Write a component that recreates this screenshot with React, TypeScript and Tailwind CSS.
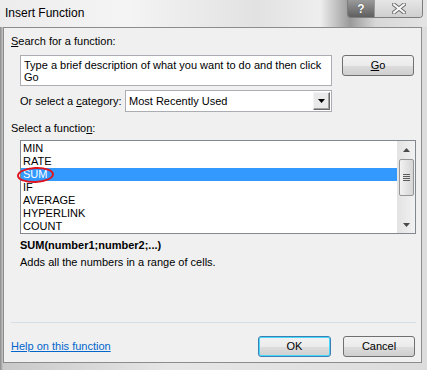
import React from "react";

const F = { fontFamily: '"Liberation Sans", Arial, sans-serif' };

function Btn({ children, w, focus }: { children: React.ReactNode; w: string; focus?: boolean }) {
  return (
    <div
      className={`${w} h-[21px] rounded-[3px] border ${focus ? "border-[#3c7fb1]" : "border-[#707070]"} flex items-center justify-center text-[11px] text-black bg-[linear-gradient(#f2f2f2_0%,#ebebeb_50%,#dddddd_51%,#cfcfcf_100%)]`}
      style={focus ? { boxShadow: "inset 0 0 0 1px #48d8fb" } : undefined}
    >
      {children}
    </div>
  );
}

const items = ["MIN", "RATE", "SUM", "IF", "AVERAGE", "HYPERLINK", "COUNT"];

export default function App() {
  return (
    <div
      className="w-[427px] h-[370px] overflow-hidden relative bg-[linear-gradient(90deg,#8a8a8a_0px,#c9c9c9_3px,#e6e6e6_40%,#dcdcdc_100%)]"
      style={F}
    >
      {/* title bar */}
      <div className="h-[27px] flex items-center pl-[5px] text-[12px] text-black bg-[linear-gradient(90deg,#ececec_0%,#f4f4f4_30%,#e2e2e2_60%,#eeeeee_75%,#9a9a9a_82%,#d8d8d8_88%,#e4e4e4_100%)]">
        <span className="mt-[-1px]">Insert Function</span>
      </div>
      <div className="absolute top-0 left-[347px] flex h-[18px] border border-t-0 border-[#7d7d7d] rounded-b-[4px] overflow-hidden">
        <div className="w-[27px] h-full flex items-center justify-center bg-[linear-gradient(#9a9a9a,#5f5f5f)] border-r border-[#9a9a9a]">
          <span className="text-white font-bold text-[12px] leading-none" style={{ textShadow: "0 0 1px #333" }}>?</span>
        </div>
        <div className="w-[47px] h-full flex items-center justify-center bg-[linear-gradient(#e6e6e6,#cfcfcf)]">
          <svg width="14" height="11" viewBox="0 0 14 11">
            <path d="M2 1.5 L12 9.5 M12 1.5 L2 9.5" stroke="#6d6d6d" strokeWidth="4" strokeLinecap="square" />
            <path d="M2 1.5 L12 9.5 M12 1.5 L2 9.5" stroke="#f8f8f8" strokeWidth="2" strokeLinecap="square" />
          </svg>
        </div>
      </div>

      {/* client area */}
      <div className="ml-[3px] w-[419px] h-[336px] border border-[#8c8c8c] bg-[#f0f0f0] pl-[7px] pr-[6px] text-[11px] text-black flex flex-col">
        <div className="mt-[7px] h-[13px] leading-[13px]">
          <span className="underline">S</span>earch for a function:
        </div>
        <div className="mt-[7px] flex items-start pl-[9px]">
          <div className="w-[312px] h-[31px] border border-[#abadb3] bg-white px-[3px] pt-[3px] leading-[12px]">
            Type a brief description of what you want to do and then click Go
          </div>
          <div className="ml-[10px]">
            <Btn w="w-[72px]">
              <span><span className="underline">G</span>o</span>
            </Btn>
          </div>
        </div>
        <div className="mt-[4px] flex items-center pl-[9px] h-[22px]">
          <div className="w-[105px]">
            Or select a <span className="underline">c</span>ategory:
          </div>
          <div className="w-[207px] h-[22px] border border-[#abadb3] bg-white flex items-center pl-[3px] pr-[1px]">
            <span className="flex-1">Most Recently Used</span>
            <div className="w-[17px] h-[18px] bg-[#e9e9e9] border border-t-[#f4f4f4] border-l-[#f4f4f4] border-r-[#696969] border-b-[#696969] flex items-center justify-center" style={{ boxShadow: "inset -1px -1px 0 #a0a0a0" }}>
              <svg width="7" height="4" viewBox="0 0 7 4"><path d="M0 0 H7 L3.5 4 Z" fill="#000" /></svg>
            </div>
          </div>
        </div>
        <div className="mt-[10px] h-[13px] leading-[13px]">
          Select a functio<span className="underline">n</span>:
        </div>
        <div className="mt-[5px] ml-[9px] w-[396px] h-[94px] border border-[#828790] bg-white flex relative">
          <div className="flex-1 pt-[1px]">
            {items.map((it) => (
              <div
                key={it}
                className={`h-[13px] leading-[13px] pl-[2px] ${it === "SUM" ? "bg-[#3399ff] text-white" : ""}`}
              >
                {it}
              </div>
            ))}
          </div>
          <div className="w-[18px] h-full bg-[linear-gradient(90deg,#e3e3e3,#f1f1f1)] flex flex-col items-center">
            <div className="h-[18px] flex items-center justify-center">
              <svg width="7" height="4" viewBox="0 0 7 4"><path d="M3.5 0 L7 4 H0 Z" fill="#4a4a4a" /></svg>
            </div>
            <div className="w-[15px] h-[37px] ml-[1px] rounded-[2px] border border-[#959595] bg-[linear-gradient(90deg,#f2f2f2,#e3e3e3_50%,#d6d6d6)] flex flex-col items-center justify-center gap-[1px]">
              {[0, 1, 2, 3].map((i) => (
                <div key={i} className="w-[7px] h-[1px] bg-[#5b5b5b]" />
              ))}
            </div>
            <div className="flex-1" />
            <div className="h-[17px] flex items-center justify-center">
              <svg width="7" height="4" viewBox="0 0 7 4"><path d="M0 0 H7 L3.5 4 Z" fill="#4a4a4a" /></svg>
            </div>
          </div>
          <div className="absolute left-[-4px] top-[26px] w-[37px] h-[16px] rounded-[50%] border-[2px] border-[#e0141e]" style={{ transform: "rotate(-3deg)" }} />
        </div>
        <div className="mt-[5px] ml-[9px] h-[13px] leading-[13px] font-bold">SUM(number1;number2;...)</div>
        <div className="mt-[4px] ml-[9px] h-[13px] leading-[13px]">Adds all the numbers in a range of cells.</div>
        <div className="mt-[53px] w-[405px] h-[1px] bg-[#d5dfe5]" />
        <div className="mt-[13px] flex items-center h-[21px]">
          <span className="text-[#0066cc] underline flex-1">Help on this function</span>
          <Btn w="w-[73px]" focus>OK</Btn>
          <div className="ml-[12px]">
            <Btn w="w-[72px]">Cancel</Btn>
          </div>
        </div>
      </div>
    </div>
  );
}
